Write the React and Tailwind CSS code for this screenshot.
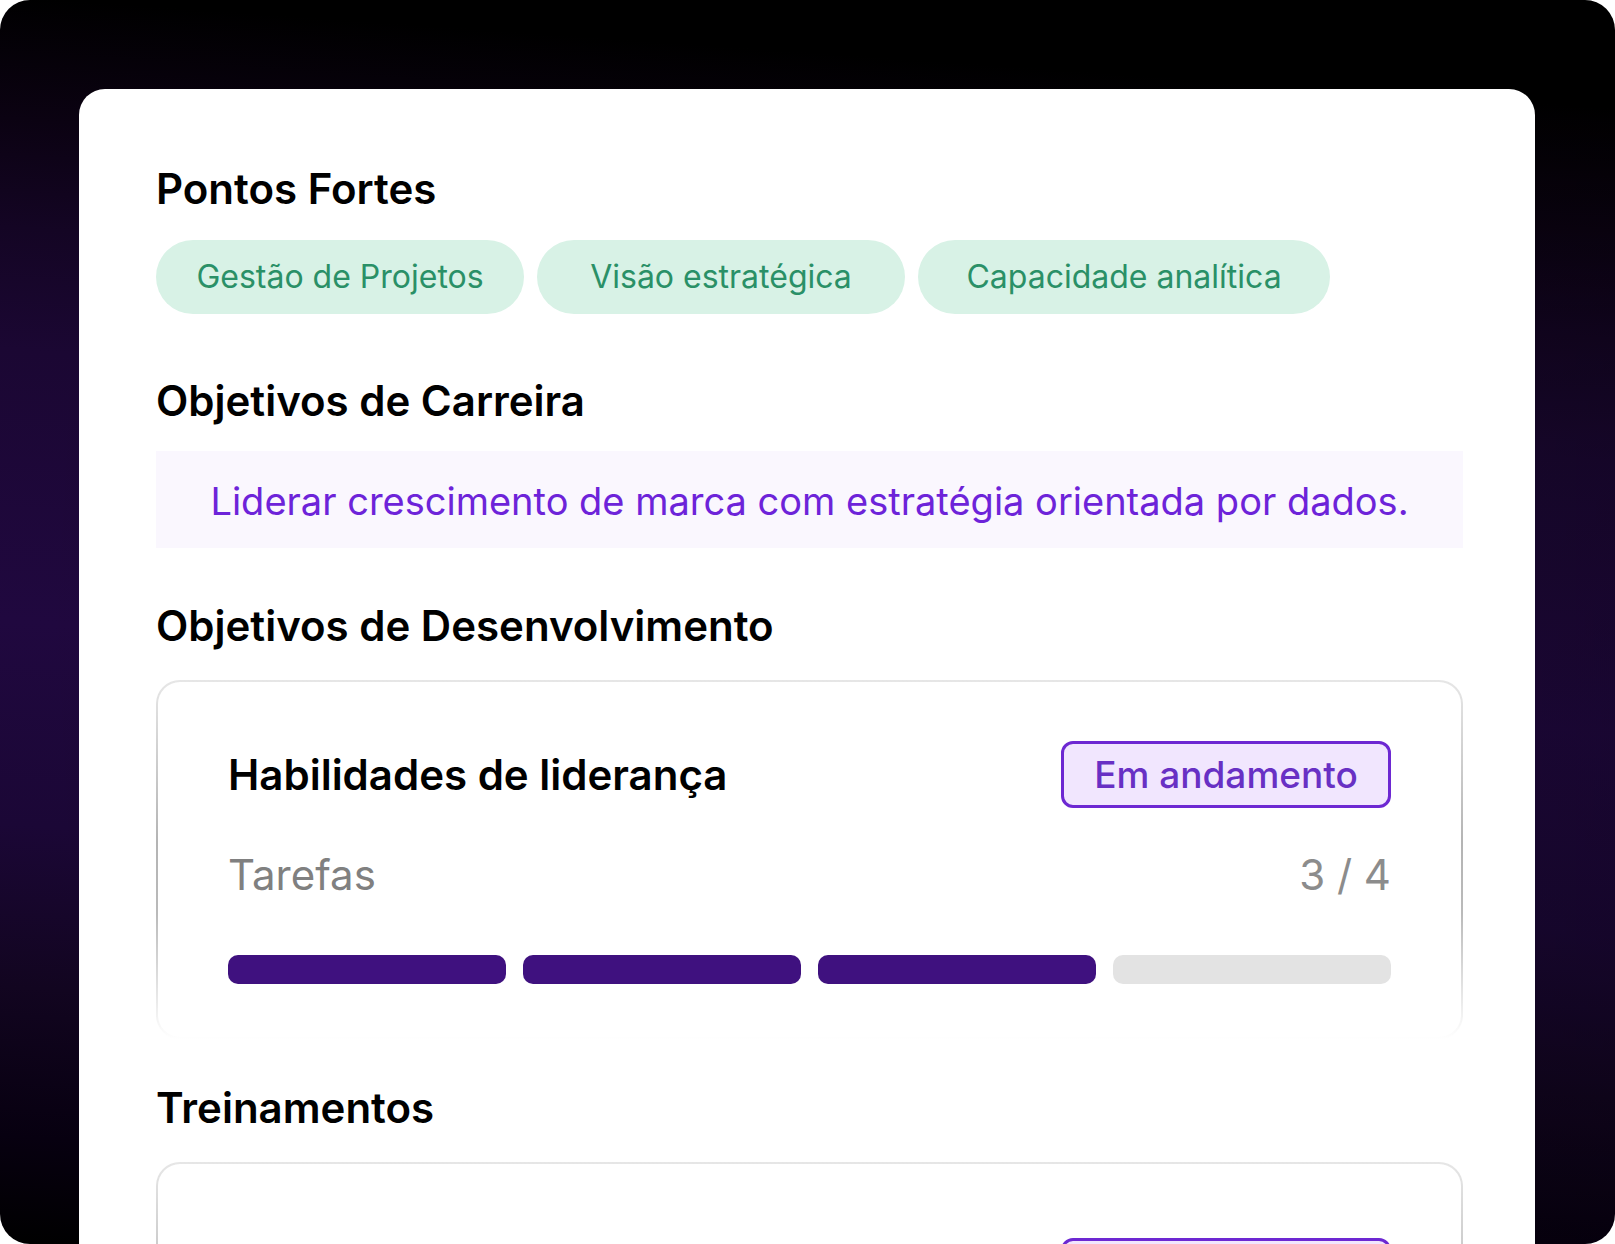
import React from "react";

const strengths = [
    { label: "Gestão de Projetos", width: "w-[368px]" },
    { label: "Visão estratégica", width: "w-[368px]" },
    { label: "Capacidade analítica", width: "w-[412px]" },
];

const SectionTitle = ({ children }) => (
    <h2 className="text-[42px] leading-[48px] font-semibold text-black">{children}</h2>
);

// Card whose outline fades out towards the bottom
const GoalCard = ({ className, children }) => (
    <div
        className={`rounded-3xl border-2 border-transparent px-[70px] [background:linear-gradient(#fff,#fff)_padding-box,linear-gradient(#e6e6e6,#dedede_8%,#b4b4b4_45%,#bababa_65%,#fff)_border-box] ${className}`}
    >
        {children}
    </div>
);

const StatusBadge = ({ children }) => (
    <span className="flex h-[67px] w-[330px] items-center justify-center rounded-xl border-3 border-[#6d28d2] bg-[#f1e6fe] text-[37px] leading-10 font-medium text-[#6830c4]">
        {children}
    </span>
);

const TaskProgress = ({ done, total }) => (
    <div className="flex gap-[17px]">
        {Array.from({ length: total }, (_, i) => (
            <div
                key={i}
                className={`h-[29px] flex-1 rounded-[10px] ${i < done ? "bg-[#3f117f]" : "bg-[#e3e3e3]"}`}
            />
        ))}
    </div>
);

const App = () => {
    return (
        <div className="h-screen bg-white font-['Inter',sans-serif]">
            <main className="h-full overflow-hidden rounded-[30px] bg-[linear-gradient(90deg,transparent,#00000038),linear-gradient(184deg,#000_8%,#0b0212_17%,#140524_25%,#1b0733_34%,#20083f_54%,#1b0736_69%,#120520_81%,#070010_92%,#000)] pt-[89px] pr-20 pl-[79px]">
                <div className="rounded-t-[26px] bg-white pt-[76px] pr-[72px] pb-20 pl-[77px]">
                    <section>
                        <SectionTitle>Pontos Fortes</SectionTitle>
                        <ul className="mt-[27px] flex gap-[13px]">
                            {strengths.map(({ label, width }) => (
                                <li
                                    key={label}
                                    className={`flex h-[74px] items-center justify-center rounded-full bg-[#d8f2e6] text-[32px] leading-10 text-[#2a9067] ${width}`}
                                >
                                    {label}
                                </li>
                            ))}
                        </ul>
                    </section>

                    <section className="mt-[63px]">
                        <SectionTitle>Objetivos de Carreira</SectionTitle>
                        <p className="mt-[26px] bg-[#faf7fe] pt-[26px] pb-[22px] text-center text-[38px] leading-[49px] text-[#6d23d9]">
                            Liderar crescimento de marca com estratégia orientada por dados.
                        </p>
                    </section>

                    <section className="mt-[54px]">
                        <SectionTitle>Objetivos de Desenvolvimento</SectionTitle>
                        <GoalCard className="mt-[30px] pt-[59px] pb-[53px]">
                            <div className="flex items-center justify-between">
                                <h3 className="text-[42px] leading-[48px] font-semibold text-black">
                                    Habilidades de liderança
                                </h3>
                                <StatusBadge>Em andamento</StatusBadge>
                            </div>
                            <div className="mt-[43px] flex items-center justify-between text-[42px] leading-[48px] text-[#808080]">
                                <p>Tarefas</p>
                                <p className="text-[#8c8c8c]">3 / 4</p>
                            </div>
                            <div className="mt-14">
                                <TaskProgress done={3} total={4} />
                            </div>
                        </GoalCard>
                    </section>

                    <section className="mt-[45px]">
                        <SectionTitle>Treinamentos</SectionTitle>
                        <GoalCard className="mt-[30px] h-[360px] pt-[74px]">
                            <div className="flex justify-end">
                                <StatusBadge />
                            </div>
                        </GoalCard>
                    </section>
                </div>
            </main>
        </div>
    );
};

export default App;
